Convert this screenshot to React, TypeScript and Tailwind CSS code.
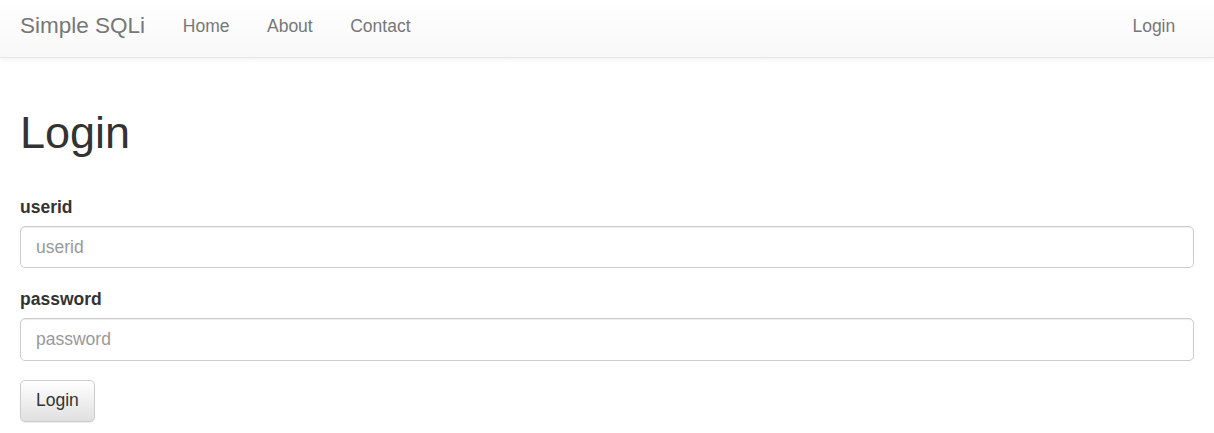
export default function App() {
  const font = { fontFamily: '"Liberation Sans", Arial, sans-serif' };
  return (
    <div className="min-h-[433px] bg-white text-[#333]" style={font}>
      {/* navbar */}
      <nav className="h-[58px] border-b border-[#e7e7e7] bg-gradient-to-b from-white to-[#f8f8f8] shadow-[0_1px_5px_rgba(0,0,0,0.075)] flex justify-between px-[20px]">
        <div className="flex">
          <a className="pt-[13px] leading-[25px] text-[22.5px] text-[#777] pr-[19px]">Simple SQLi</a>
          <ul className="flex">
            {["Home", "About", "Contact"].map((l) => (
              <li key={l}>
                <a className="block px-[18.75px] pt-[14px] leading-[25px] text-[17.5px] text-[#777]">{l}</a>
              </li>
            ))}
          </ul>
        </div>
        <ul className="flex">
          <li>
            <a className="block px-[18.75px] pt-[14px] leading-[25px] text-[17.5px] text-[#777]">Login</a>
          </li>
        </ul>
      </nav>

      <div className="px-[20px]">
        <h1 className="mt-[50px] text-[45px] leading-[49.5px]">Login</h1>
        <form className="mt-[37px]" onSubmit={(e) => e.preventDefault()}>
          <div className="mb-[18.75px]">
            <label className="block font-bold text-[17.5px] leading-[25px] mb-[6.25px]">userid</label>
            <input
              placeholder="userid"
              className="block w-full h-[42.5px] px-[15px] py-[7.5px] text-[17.5px] text-[#555] border border-[#ccc] rounded-[5px] shadow-[inset_0_1px_1px_rgba(0,0,0,0.075)] placeholder:text-[#999] outline-none"
            />
          </div>
          <div className="mb-[18.75px]">
            <label className="block font-bold text-[17.5px] leading-[25px] mb-[6.25px]">password</label>
            <input
              type="password"
              placeholder="password"
              className="block w-full h-[42.5px] px-[15px] py-[7.5px] text-[17.5px] text-[#555] border border-[#ccc] rounded-[5px] shadow-[inset_0_1px_1px_rgba(0,0,0,0.075)] placeholder:text-[#999] outline-none"
            />
          </div>
          <button
            type="submit"
            className="h-[42.5px] px-[15px] text-[17.5px] leading-[25px] text-[#333] border border-[#ccc] rounded-[5px] bg-gradient-to-b from-white to-[#e0e0e0] shadow-[inset_0_1px_0_rgba(255,255,255,0.15),0_1px_1px_rgba(0,0,0,0.075)]"
          >
            Login
          </button>
        </form>
      </div>
    </div>
  );
}
